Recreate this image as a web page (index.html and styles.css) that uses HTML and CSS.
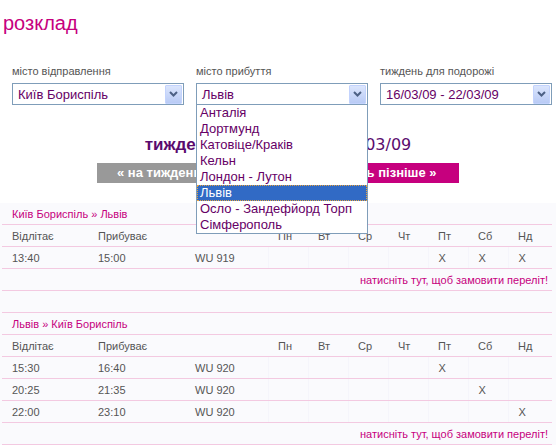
FILE: index.html
```html
<!DOCTYPE html>
<html lang="uk">
<head>
    <meta charset="UTF-8">
    <title>Розклад</title>
    <link rel="stylesheet" href="styles.css">
</head>
<body>
    <h1 class="zagolovok">розклад</h1>

    <div class="filtry">
        <div class="pole">
            <div class="pidpys">місто відправлення</div>
            <div class="vybir">
                <span>Київ Бориспіль</span>
                <span class="strilka"><svg width="9" height="6" viewBox="0 0 9 6"><path d="M1 1 L4.5 4.5 L8 1" fill="none" stroke="#4d6185" stroke-width="2"/></svg></span>
            </div>
        </div>
        <div class="pole">
            <div class="pidpys">місто прибуття</div>
            <div class="vybir">
                <span>Львів</span>
                <span class="strilka"><svg width="9" height="6" viewBox="0 0 9 6"><path d="M1 1 L4.5 4.5 L8 1" fill="none" stroke="#4d6185" stroke-width="2"/></svg></span>
                <ul class="spysok">
                    <li>Анталія</li>
                    <li>Дортмунд</li>
                    <li>Катовіце/Краків</li>
                    <li>Кельн</li>
                    <li>Лондон - Лутон</li>
                    <li class="aktyvnyi">Львів</li>
                    <li>Осло - Зандефйорд Торп</li>
                    <li>Сімферополь</li>
                </ul>
            </div>
        </div>
        <div class="pole">
            <div class="pidpys">тиждень для подорожі</div>
            <div class="vybir">
                <span>16/03/09 - 22/03/09</span>
                <span class="strilka"><svg width="9" height="6" viewBox="0 0 9 6"><path d="M1 1 L4.5 4.5 L8 1" fill="none" stroke="#4d6185" stroke-width="2"/></svg></span>
            </div>
        </div>
    </div>

    <div class="tyzhden"><b>тиждень</b> 16/03/09 - 22/03/09</div>

    <div class="navigacija">
        <a class="knopka siryi">« на тиждень раніше</a>
        <a class="knopka rozhevyi">на тиждень пізніше »</a>
    </div>

    <div class="rozklad">
        <table>
            <colgroup>
                <col style="width:86px"><col style="width:97px"><col style="width:83px">
                <col style="width:40px"><col style="width:40px"><col style="width:40px"><col style="width:40px">
                <col style="width:40px"><col style="width:40px"><col style="width:44px">
            </colgroup>
            <tr><td colspan="10" class="marshrut">Київ Бориспіль » Львів</td></tr>
            <tr class="shapka">
                <td>Відлітає</td><td>Прибуває</td><td></td>
                <td>Пн</td><td>Вт</td><td>Ср</td><td>Чт</td><td>Пт</td><td>Сб</td><td>Нд</td>
            </tr>
            <tr class="reis">
                <td>13:40</td><td>15:00</td><td>WU 919</td>
                <td class="den"></td><td class="den"></td><td class="den"></td><td class="den"></td><td class="den">X</td><td class="den">X</td><td class="den">X</td>
            </tr>
            <tr><td colspan="10" class="zamovyty">натисніть тут, щоб замовити переліт!</td></tr>
            <tr><td colspan="10"></td></tr>

            <tr><td colspan="10" class="marshrut">Львів » Київ Бориспіль</td></tr>
            <tr class="shapka">
                <td>Відлітає</td><td>Прибуває</td><td></td>
                <td>Пн</td><td>Вт</td><td>Ср</td><td>Чт</td><td>Пт</td><td>Сб</td><td>Нд</td>
            </tr>
            <tr class="reis">
                <td>15:30</td><td>16:40</td><td>WU 920</td>
                <td class="den"></td><td class="den"></td><td class="den"></td><td class="den"></td><td class="den">X</td><td class="den"></td><td class="den"></td>
            </tr>
            <tr class="reis">
                <td>20:25</td><td>21:35</td><td>WU 920</td>
                <td class="den"></td><td class="den"></td><td class="den"></td><td class="den"></td><td class="den"></td><td class="den">X</td><td class="den"></td>
            </tr>
            <tr class="reis">
                <td>22:00</td><td>23:10</td><td>WU 920</td>
                <td class="den"></td><td class="den"></td><td class="den"></td><td class="den"></td><td class="den"></td><td class="den"></td><td class="den">X</td>
            </tr>
            <tr><td colspan="10" class="zamovyty">натисніть тут, щоб замовити переліт!</td></tr>
        </table>
    </div>
</body>
</html>
```

FILE: styles.css
```css
body {
    margin: 0;
    background-color: #fff;
    font-family: "Liberation Sans", Arial, sans-serif;
    color: #555;
}

.zagolovok {
    margin: 0;
    padding: 11px 0 0 3px;
    font-size: 20px;
    line-height: 24px;
    font-weight: normal;
    color: #c6007e;
}

.filtry {
    display: flex;
    gap: 12px;
    margin-top: 30px;
    padding-left: 12px;
}

.pole {
    width: 172px;
}

.pidpys {
    font-size: 11px;
    line-height: 13px;
    color: #555;
    margin-bottom: 5px;
}

.vybir {
    position: relative;
    display: flex;
    align-items: center;
    justify-content: space-between;
    height: 20px;
    border: 1px solid #7f9db9;
    background-color: #fff;
    padding-left: 5px;
    font-size: 13px;
    color: #660066;
}

.strilka {
    display: flex;
    align-items: center;
    justify-content: center;
    width: 15px;
    height: 17px;
    margin-right: 1px;
    border: 1px solid #c3d3fd;
    border-radius: 1px;
    background: linear-gradient(#dbe5fd, #b9cbf5);
}

.spysok {
    position: absolute;
    top: 100%;
    left: -1px;
    width: 170px;
    margin: 0;
    padding: 0;
    list-style: none;
    border: 1px solid #7f9db9;
    background-color: #fff;
    z-index: 5;
}

.spysok li {
    height: 16px;
    line-height: 16px;
    padding-left: 3px;
    font-size: 13px;
    color: #660066;
}

.spysok li.aktyvnyi {
    background-color: #316ac5;
    color: #fff;
    outline: 1px dotted #e8a33c;
    outline-offset: -1px;
}

.tyzhden {
    margin-top: 30px;
    text-align: center;
    font-family: "DejaVu Sans", Verdana, sans-serif;
    font-size: 16px;
    line-height: 20px;
    word-spacing: 10px;
    color: #5a0b6e;
}

.tyzhden b {
    font-family: "Liberation Sans", Arial, sans-serif;
    font-size: 17px;
}

.navigacija {
    display: flex;
    justify-content: center;
    gap: 6px;
    margin-top: 8px;
}

.knopka {
    display: block;
    width: 138px;
    padding: 0 20px;
    height: 20px;
    line-height: 20px;
    font-size: 13px;
    font-weight: bold;
    color: #fff;
    cursor: pointer;
}

.siryi {
    background-color: #999;
}

.rozhevyi {
    background-color: #c6007e;
}

.rozklad {
    margin-top: 20px;
    background-color: #fafafd;
    padding-left: 2px;
}

.rozklad table {
    width: 550px;
    table-layout: fixed;
    border-collapse: collapse;
    font-size: 11px;
}

.rozklad td {
    height: 21px;
    padding: 0 0 0 10px;
    border-bottom: 1px solid #f3c9e1;
    color: #555;
    white-space: nowrap;
    overflow: hidden;
}

.rozklad td.marshrut {
    color: #c6007e;
}

.rozklad td.zamovyty {
    text-align: right;
    padding-right: 4px;
    color: #c6007e;
}

.rozklad td.den {
    border-left: 1px solid #f5f5fb;
}
```
